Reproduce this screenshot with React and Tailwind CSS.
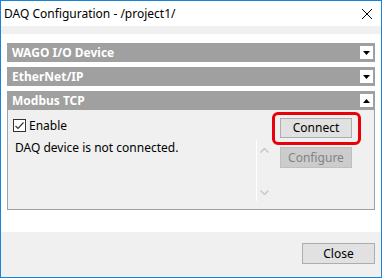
import React from 'react'

const font = { fontFamily: '"Noto Sans", "Liberation Sans", sans-serif' }

function Arrow({ up }) {
  return (
    <div className="w-[13px] h-[13px] bg-white flex items-center justify-center">
      <svg width="7" height="4" viewBox="0 0 7 4">
        {up ? <path d="M0 4 L3.5 0 L7 4 Z" fill="#000" /> : <path d="M0 0 L7 0 L3.5 4 Z" fill="#000" />}
      </svg>
    </div>
  )
}

function Header({ title, up }) {
  return (
    <div className="h-[19px] bg-[#a0a0a0] flex items-center justify-between pl-[5px] pr-[2px]">
      <span className="text-white font-bold text-[12px] leading-none">{title}</span>
      <Arrow up={up} />
    </div>
  )
}

export default function App() {
  return (
    <div className="w-[382px] h-[278px] border border-[#1883d7] flex flex-col bg-[#f0f0f0] text-black" style={font}>
      {/* barra de título */}
      <div className="h-[25px] bg-white flex items-center justify-between pl-[3px] pr-[9px]">
        <span className="text-[12px] leading-none">DAQ Configuration - /project1/</span>
        <svg width="10" height="10" viewBox="0 0 10 10">
          <path d="M0 0 L10 10 M10 0 L0 10" stroke="#000" strokeWidth="1" />
        </svg>
      </div>
      <div className="h-[8px]" />

      {/* área de dispositivos */}
      <div className="flex-1 bg-white pt-[9px] pl-[6px] pr-[6px] flex flex-col gap-[5px]">
        <Header title="WAGO I/O Device" />
        <Header title="EtherNet/IP" />
        <div>
          <Header title="Modbus TCP" up />
          <div className="h-[100px] bg-[#f0f0f0] border border-t-0 border-[#a0a0a0] flex">
            <div className="flex-1 pl-[5px] pt-[9px]">
              <label className="flex items-center gap-[3px] text-[12px] leading-[13px]">
                <span className="w-[13px] h-[13px] border border-[#333] bg-white flex items-center justify-center">
                  <svg width="9" height="8" viewBox="0 0 9 8">
                    <path d="M0.5 4 L3 6.5 L8.5 0.5" stroke="#333" strokeWidth="1.2" fill="none" />
                  </svg>
                </span>
                Enable
              </label>
              <p className="text-[12px] leading-[15px] mt-[8px] ml-[2px]">DAQ device is not connected.</p>
            </div>
            <div className="w-px pt-[30px]">
              <div className="w-px h-[61px] bg-white" />
            </div>
            <div className="w-[14px] flex flex-col items-center pt-[38px]">
              <svg width="9" height="5" viewBox="0 0 9 5"><path d="M0.5 4.5 L4.5 0.5 L8.5 4.5" stroke="#c8c8c8" strokeWidth="1.5" fill="none" /></svg>
              <svg className="mt-[37px]" width="9" height="5" viewBox="0 0 9 5"><path d="M0.5 0.5 L4.5 4.5 L8.5 0.5" stroke="#c8c8c8" strokeWidth="1.5" fill="none" /></svg>
            </div>
            <div className="flex flex-col items-start pl-[9px] pr-[22px] pt-[8px] gap-[9px]">
              <div className="relative">
                <div className="absolute -left-[8px] -top-[6px] w-[89px] h-[33px] border-[3px] border-[#e8000b] rounded-[6px]" />
                <button className="block w-[72px] h-[20px] bg-[#e1e1e1] border border-[#adadad] text-[12px] leading-none">Connect</button>
              </div>
              <button className="block w-[72px] h-[21px] bg-[#cccccc] border border-[#bfbfbf] text-[12px] leading-none text-[#838383]">Configure</button>
            </div>
          </div>
        </div>
      </div>

      {/* pie */}
      <div className="h-[45px] flex justify-end items-start pt-[11px] pr-[6px]">
        <button className="block w-[73px] h-[21px] bg-[#e1e1e1] border border-[#adadad] text-[12px] leading-none">Close</button>
      </div>
    </div>
  )
}
